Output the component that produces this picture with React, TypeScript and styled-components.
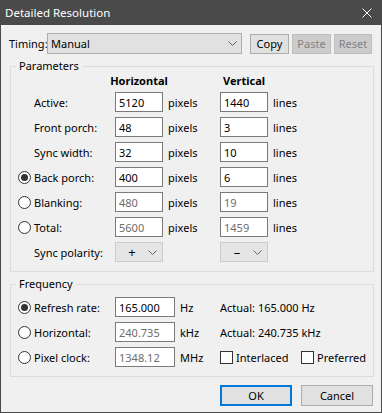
import styled, { createGlobalStyle } from "styled-components";

const GlobalStyle = createGlobalStyle`
  html, body {
    margin: 0;
    padding: 0;
    background: #f0f0f0;
  }
  body {
    font-family: "Noto Sans", "Liberation Sans", sans-serif;
    font-size: 11px;
    color: #000;
  }
`;

interface ParamRow {
  label: string;
  radio?: boolean;
  checked?: boolean;
  h: string;
  v: string;
  readOnly?: boolean;
}

const paramRows: ParamRow[] = [
  { label: "Active:", h: "5120", v: "1440" },
  { label: "Front porch:", h: "48", v: "3" },
  { label: "Sync width:", h: "32", v: "10" },
  { label: "Back porch:", radio: true, checked: true, h: "400", v: "6" },
  { label: "Blanking:", radio: true, h: "480", v: "19", readOnly: true },
  { label: "Total:", radio: true, h: "5600", v: "1459", readOnly: true },
];

const paramColumns = "16px 81px 48px 57px 48px auto";

function Chevron() {
  return (
    <svg width="9" height="5" viewBox="0 0 9 5">
      <path d="M0.5 0.5 L4.5 4.5 L8.5 0.5" fill="none" stroke="#606060" strokeWidth="1" />
    </svg>
  );
}

function App() {
  return (
    <Window>
      <GlobalStyle />
      <TitleBar>
        <Title>Detailed Resolution</Title>
        <svg width="10" height="10" viewBox="0 0 10 10">
          <path d="M0.5 0.5 L9.5 9.5 M9.5 0.5 L0.5 9.5" stroke="#fff" strokeWidth="1" />
        </svg>
      </TitleBar>
      <Body>
        <TimingRow>
          <TimingLabel>Timing:</TimingLabel>
          <Combo $width={195}>
            <span>Manual</span>
            <Chevron />
          </Combo>
          <ToolButtons>
            <Button $width={39}>Copy</Button>
            <Button $width={39} disabled>
              Paste
            </Button>
            <Button $width={38} disabled>
              Reset
            </Button>
          </ToolButtons>
        </TimingRow>

        <Group>
          <Legend>Parameters</Legend>
          <HeaderGrid>
            <HeaderCell $col={3}>
              <span>Horizontal</span>
            </HeaderCell>
            <HeaderCell $col={5}>
              <span>Vertical</span>
            </HeaderCell>
          </HeaderGrid>
          <ParamGrid>
            {paramRows.map((row) => (
              <Row key={row.label}>
                <RadioCell>{row.radio && <Radio $checked={row.checked} />}</RadioCell>
                <Label>{row.label}</Label>
                <Field $readOnly={row.readOnly}>{row.h}</Field>
                <Unit>pixels</Unit>
                <Field $readOnly={row.readOnly}>{row.v}</Field>
                <Unit>lines</Unit>
              </Row>
            ))}
            <Row>
              <RadioCell />
              <Label>Sync polarity:</Label>
              <PolarityCombo>
                <PolaritySign>+</PolaritySign>
                <Chevron />
              </PolarityCombo>
              <span />
              <PolarityCombo>
                <PolaritySign>–</PolaritySign>
                <Chevron />
              </PolarityCombo>
              <span />
            </Row>
          </ParamGrid>
        </Group>

        <FreqGroup>
          <Legend>Frequency</Legend>
          <FreqGrid>
            <Row>
              <RadioCell>
                <Radio $checked />
              </RadioCell>
              <Label>Refresh rate:</Label>
              <Field>165.000</Field>
              <Unit>Hz</Unit>
              <Actual>Actual: 165.000 Hz</Actual>
            </Row>
            <Row>
              <RadioCell>
                <Radio />
              </RadioCell>
              <Label>Horizontal:</Label>
              <Field $readOnly>240.735</Field>
              <Unit>kHz</Unit>
              <Actual>Actual: 240.735 kHz</Actual>
            </Row>
            <Row>
              <RadioCell>
                <Radio />
              </RadioCell>
              <Label>Pixel clock:</Label>
              <Field $readOnly>1348.12</Field>
              <Unit>MHz</Unit>
              <CheckLabel>
                <CheckBox />
                Interlaced
              </CheckLabel>
              <CheckLabel>
                <CheckBox />
                Preferred
              </CheckLabel>
            </Row>
          </FreqGrid>
        </FreqGroup>

        <Footer>
          <DialogButton $default>OK</DialogButton>
          <DialogButton>Cancel</DialogButton>
        </Footer>
      </Body>
    </Window>
  );
}

const Window = styled.div`
  width: 382px;
  height: 413px;
  display: flex;
  flex-direction: column;
  background: #f0f0f0;
`;

const TitleBar = styled.div`
  height: 25px;
  flex-shrink: 0;
  padding: 0 10px 0 5px;
  box-sizing: border-box;
  display: flex;
  align-items: center;
  justify-content: space-between;
  background: #4a4a4a;
`;

const Title = styled.span`
  color: #fff;
  font-size: 11.5px;
`;

const Body = styled.div`
  flex: 1;
  display: flex;
  flex-direction: column;
  padding: 0 7px 0 8px;
  border: 1px solid #4a4a4a;
  border-top: none;
`;

const TimingRow = styled.div`
  height: 21px;
  margin-top: 8px;
  display: flex;
  align-items: center;
`;

const TimingLabel = styled.span`
  width: 38px;
`;

const Combo = styled.div<{ $width: number }>`
  width: ${(p) => p.$width}px;
  height: 21px;
  box-sizing: border-box;
  padding: 0 4px 0 3px;
  display: flex;
  align-items: center;
  justify-content: space-between;
  background: #e1e1e1;
  border: 1px solid #adadad;
`;

const ToolButtons = styled.div`
  margin-left: 8px;
  display: flex;
  gap: 3px;
`;

const Button = styled.button<{ $width: number }>`
  width: ${(p) => p.$width}px;
  height: 20px;
  padding: 0;
  font: inherit;
  color: #000;
  background: #e1e1e1;
  border: 1px solid #adadad;

  &:disabled {
    color: #838383;
    background: #cccccc;
    border-color: #bfbfbf;
  }
`;

const Group = styled.fieldset`
  width: 364px;
  box-sizing: border-box;
  margin: 4px 0 0 1px;
  padding: 0 0 9px 0;
  border: 1px solid #dcdcdc;
`;

const FreqGroup = styled(Group)`
  margin-top: 4px;
  padding-top: 5px;
`;

const Legend = styled.legend`
  margin-left: 5px;
  padding: 0 3px;
  line-height: 16px;
`;

const HeaderGrid = styled.div`
  display: grid;
  grid-template-columns: ${paramColumns};
  height: 13px;
  margin-bottom: 5px;
  padding-left: 7px;
`;

const ParamGrid = styled.div`
  display: grid;
  grid-template-columns: ${paramColumns};
  grid-auto-rows: 20px;
  row-gap: 5px;
  padding-left: 7px;
`;

const FreqGrid = styled.div`
  display: grid;
  grid-template-columns: 16px 81px 60px 45px 81px auto;
  grid-auto-rows: 20px;
  row-gap: 5px;
  padding-left: 7px;
`;

const Row = styled.div`
  display: contents;
`;

const HeaderCell = styled.div<{ $col: number }>`
  grid-column: ${(p) => p.$col};
  display: flex;
  justify-content: center;
  white-space: nowrap;
  font-weight: bold;
  line-height: 13px;
`;

const RadioCell = styled.div`
  display: flex;
  align-items: center;
`;

const Radio = styled.span<{ $checked?: boolean }>`
  width: 13px;
  height: 13px;
  box-sizing: border-box;
  border: 1px solid #333;
  border-radius: 50%;
  background: #fff;
  display: flex;
  align-items: center;
  justify-content: center;

  &::after {
    content: "";
    width: 7px;
    height: 7px;
    border-radius: 50%;
    background: #333;
    display: ${(p) => (p.$checked ? "block" : "none")};
  }
`;

const Label = styled.div`
  display: flex;
  align-items: center;
  white-space: nowrap;
`;

const Field = styled.div<{ $readOnly?: boolean }>`
  height: 20px;
  box-sizing: border-box;
  padding: 0 3px;
  display: flex;
  align-items: center;
  background: #fff;
  border: 1px solid #7a7a7a;
  color: ${(p) => (p.$readOnly ? "#6d6d6d" : "#000")};
`;

const Unit = styled.div`
  padding-left: 5px;
  display: flex;
  align-items: center;
`;

const PolarityCombo = styled.div`
  height: 20px;
  box-sizing: border-box;
  padding: 0 5px 0 0;
  display: flex;
  align-items: center;
  background: #e5e5e5;
  border: 1px solid #cccccc;
`;

const PolaritySign = styled.span`
  flex: 1;
  text-align: center;
  font-size: 13px;
`;

const Actual = styled.div`
  grid-column: 5 / span 2;
  display: flex;
  align-items: center;
  white-space: nowrap;
`;

const CheckLabel = styled.div`
  display: flex;
  align-items: center;
  gap: 3px;
  white-space: nowrap;
`;

const CheckBox = styled.span`
  width: 13px;
  height: 13px;
  box-sizing: border-box;
  border: 1px solid #333;
  background: #fff;
`;

const Footer = styled.div`
  margin-top: 8px;
  display: flex;
  justify-content: flex-end;
  gap: 9px;
  padding-right: 1px;
`;

const DialogButton = styled.button<{ $default?: boolean }>`
  width: 72px;
  height: 21px;
  padding: 0;
  font: inherit;
  color: #000;
  background: #e1e1e1;
  border: ${(p) => (p.$default ? "2px solid #0078d7" : "1px solid #adadad")};
`;

export default App;
